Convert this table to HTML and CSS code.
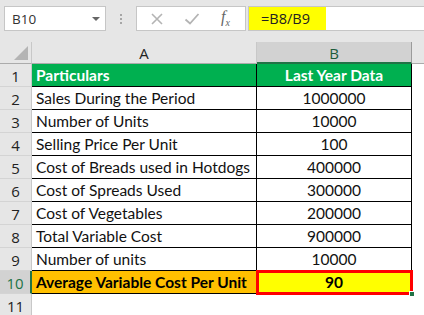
FILE: index.html
```html
<!DOCTYPE html>
<html>
<head>
<meta charset="utf-8">
<link rel="stylesheet" href="styles.css">
</head>
<body>
<div class="app">
  <div class="toolbar">
    <div class="namebox">
      <span class="nb-text">B10</span>
      <span class="nb-arrow"></span>
    </div>
    <div class="sep"><span></span><span></span><span></span></div>
    <div class="fbtns">
      <svg class="ico" width="14" height="14" viewBox="0 0 14 14"><path d="M2 2L12 12M12 2L2 12" stroke="#b4b4b4" stroke-width="1.6" fill="none"/></svg>
      <svg class="ico" width="16" height="14" viewBox="0 0 16 14"><path d="M1.5 7.5L6 11.5L14.5 2" stroke="#b4b4b4" stroke-width="1.8" fill="none"/></svg>
      <span class="fx">f<sub>x</sub></span>
    </div>
    <div class="finput"><span class="formula">=B8/B9</span></div>
  </div>
  <div class="sheet">
    <div class="corner"><span class="tri"></span></div>
    <div class="colh">A</div>
    <div class="colh sel">B</div>
    <div class="colh rest"></div>

    <div class="rowh">1</div>
    <div class="cell head">Particulars</div>
    <div class="cell head num">Last Year Data</div>
    <div class="blank"></div>

    <div class="rowh">2</div>
    <div class="cell">Sales During the Period</div>
    <div class="cell num">1000000</div>
    <div class="blank"></div>

    <div class="rowh">3</div>
    <div class="cell">Number of Units</div>
    <div class="cell num">10000</div>
    <div class="blank"></div>

    <div class="rowh">4</div>
    <div class="cell">Selling Price Per Unit</div>
    <div class="cell num">100</div>
    <div class="blank"></div>

    <div class="rowh">5</div>
    <div class="cell">Cost of Breads used in Hotdogs</div>
    <div class="cell num">400000</div>
    <div class="blank"></div>

    <div class="rowh">6</div>
    <div class="cell">Cost of Spreads Used</div>
    <div class="cell num">300000</div>
    <div class="blank"></div>

    <div class="rowh">7</div>
    <div class="cell">Cost of Vegetables</div>
    <div class="cell num">200000</div>
    <div class="blank"></div>

    <div class="rowh">8</div>
    <div class="cell">Total Variable Cost</div>
    <div class="cell num">900000</div>
    <div class="blank"></div>

    <div class="rowh">9</div>
    <div class="cell">Number of units</div>
    <div class="cell num">10000</div>
    <div class="blank"></div>

    <div class="rowh selrow">10</div>
    <div class="cell total">Average Variable Cost Per Unit</div>
    <div class="cell num result">90<span class="handle"></span></div>
    <div class="blank"></div>

    <div class="rowh last">11</div>
    <div class="empty"></div>
    <div class="empty"></div>
    <div class="empty"></div>
  </div>
</div>
</body>
</html>
```

FILE: styles.css
```css
* { box-sizing: border-box; }
html, body { margin: 0; padding: 0; }
body { font-family: Lato, "Open Sans", sans-serif; }
.app { width: 424px; height: 315px; overflow: hidden; background: #fff; }

.toolbar {
  height: 42px;
  background: #e6e6e6;
  display: flex;
  align-items: flex-start;
  padding: 6px 0 0 4px;
}
.namebox {
  width: 102px; height: 25px;
  background: #fff;
  border: 1px solid #c6c6c6;
  display: flex; align-items: center; justify-content: space-between;
  padding: 0 5px 0 7px;
  font-family: "Open Sans", sans-serif;
  font-size: 13.5px; color: #333;
}
.nb-arrow {
  width: 0; height: 0;
  border-left: 4px solid transparent;
  border-right: 4px solid transparent;
  border-top: 4px solid #666;
}
.sep {
  width: 30px; height: 25px;
  display: flex; flex-direction: column; align-items: center; justify-content: center; gap: 2px;
}
.sep span { width: 2px; height: 2px; background: #a6a6a6; }
.fbtns {
  width: 110px; height: 25px;
  background: #fff;
  border: 1px solid #c6c6c6;
  display: flex; align-items: center;
  padding-left: 13px;
  gap: 20px;
}
.fx {
  font-family: "Liberation Serif", serif; font-style: italic;
  font-size: 16px; color: #666; margin-left: 1px; line-height: 1;
}
.fx sub { font-size: 10px; }
.finput {
  flex: 1; height: 25px; margin-left: 2px;
  background: #fff;
  border: 1px solid #c6c6c6; border-right: none;
  display: flex;
}
.formula {
  width: 77px; height: 100%;
  background: #ffff00;
  font-family: "Open Sans", sans-serif;
  font-size: 14.5px; color: #222;
  padding: 2px 0 0 12px;
}

.sheet {
  display: grid;
  grid-template-columns: 32px 225px 155px 1fr;
  grid-template-rows: 22px repeat(10, 23px) 22px;
  font-size: 15.5px;
}
.corner {
  background: #e6e6e6;
  border-right: 1px solid #c8c8c8;
  border-bottom: 1px solid #ababab;
  position: relative;
}
.tri {
  position: absolute; right: 3px; bottom: 3px;
  width: 0; height: 0;
  border-left: 14px solid transparent;
  border-bottom: 14px solid #b4b4b4;
}
.colh {
  background: #e6e6e6;
  border-right: 1px solid #c8c8c8;
  border-bottom: 1px solid #ababab;
  display: flex; align-items: center; justify-content: center;
  font-family: "Open Sans", sans-serif; font-size: 15px; color: #222;
  padding-top: 1px;
}
.colh.sel {
  background: #d2d2d2;
  border-bottom: 2px solid #217346;
  border-right: 1px solid #9b9b9b;
  color: #1d5c3a;
}
.colh.rest { border-right: none; }

.rowh {
  background: #e6e6e6;
  border-right: 1px solid #c8c8c8;
  border-bottom: 1px solid #d4d4d4;
  display: flex; align-items: flex-end; justify-content: center;
  font-family: "Open Sans", sans-serif; font-size: 15px; color: #222;
  padding-bottom: 0;
}
.rowh.selrow {
  background: #d2d2d2;
  color: #217346;
  border-right: 2px solid #217346;
}
.rowh.last { border-bottom: none; }

.cell {
  border-right: 1px solid #000;
  border-bottom: 1px solid #000;
  padding: 0 0 1px 4px;
  display: flex; align-items: flex-end;
  color: #111;
  white-space: nowrap;
  line-height: 20px;
}
.cell.num { justify-content: center; padding-left: 0; }
.head {
  background: #00b050;
  color: #fff;
  font-weight: bold;
}
.total {
  background: #ffc000;
  font-weight: bold;
  color: #000;
}
.result {
  background: #ffff00;
  font-weight: bold;
  color: #000;
  outline: 3px solid #ff0000;
  outline-offset: -2px;
  position: relative;
}
.handle {
  position: absolute; right: -4px; bottom: -4px;
  width: 6px; height: 6px;
  background: #217346;
  border: 1px solid #fff;
}
.blank, .empty { background: #fff; }
```
